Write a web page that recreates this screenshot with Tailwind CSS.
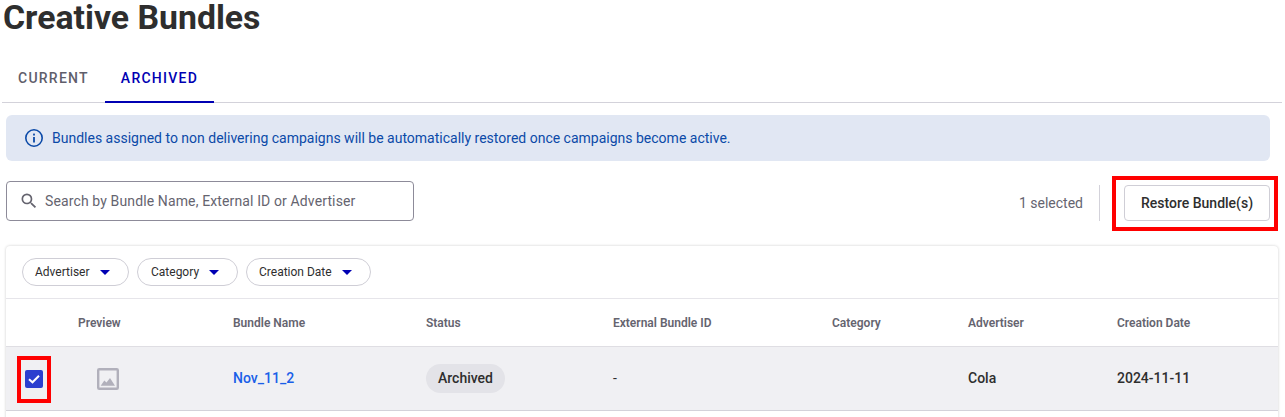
<!DOCTYPE html>
<html><head><meta charset="utf-8"><script src="https://cdn.jsdelivr.net/npm/@tailwindcss/browser@4"></script></head>
<body class="bg-white font-['Roboto',sans-serif] overflow-hidden">
<div class="relative h-[417px] w-[1285px] overflow-hidden">
  <div class="pl-[3px] h-[37px]"><h1 class="text-[33.8px] leading-[35px] font-bold text-[#2e2e2e]">Creative Bundles</h1></div>
  <div class="ml-[2px] w-[1280px] h-[66px] border-b border-[#d3d2da] flex items-end">
    <div class="h-[50px] pl-[16px] pr-[16px] pt-[2px] flex items-center text-sm font-medium tracking-[1.25px] text-[#5f5e6b]">CURRENT</div>
    <div class="h-[50px] px-[16px] pt-[2px] flex items-center text-sm font-medium tracking-[1.25px] text-[#0000b3] border-b-2 border-[#0000b3] -mb-px">ARCHIVED</div>
  </div>
  <div class="mt-[12px] ml-[6px] w-[1264px] h-[46px] rounded-md bg-[#e1e7f3] flex items-center pl-[18px] gap-[8px] text-sm text-[#0b4aa8]">
    <svg class="w-[20px] h-[20px]" viewBox="0 0 20 20" fill="none"><circle cx="10" cy="10" r="8.2" stroke="#0b4aa8" stroke-width="1.6"/><rect x="9.1" y="9" width="1.8" height="5.5" fill="#0b4aa8"/><rect x="9.1" y="5.6" width="1.8" height="1.9" fill="#0b4aa8"/></svg>
    <span>Bundles assigned to non delivering campaigns will be automatically restored once campaigns become active.</span>
  </div>
  <div class="mt-[20px] ml-[6px] w-[1264px] h-[40px] flex items-center justify-between">
    <div class="w-[408px] h-[40px] border border-[#8d8b99] rounded flex items-center pl-[12px] gap-[6px] text-sm tracking-[0.125px] text-[#65646f]">
      <svg class="w-[20px] h-[20px] shrink-0" viewBox="0 0 24 24" fill="#65646f"><path d="M15.5 14h-.79l-.28-.27A6.47 6.47 0 0 0 16 9.5 6.5 6.5 0 1 0 9.5 16c1.61 0 3.09-.59 4.23-1.57l.27.28v.79l5 4.99L20.49 19l-4.99-5zm-6 0C7.01 14 5 11.99 5 9.5S7.01 5 9.5 5 14 7.01 14 9.5 11.99 14 9.5 14z"/></svg>
      <span>Search by Bundle Name, External ID or Advertiser</span>
    </div>
    <div class="flex items-center h-[36px] mt-[4px]">
      <span class="text-sm text-[#65646f] mr-[16px]">1 selected</span>
      <div class="w-px h-[36px] bg-[#d3d2da] mr-[24px]"></div>
      <div class="w-[146px] h-[36px] border border-[#cfced6] rounded flex items-center justify-center text-sm font-medium text-[#2e2e2e]">Restore Bundle(s)</div>
    </div>
  </div>
  <div class="mt-[25px] ml-[6px] w-[1272px] h-[200px] bg-white rounded-t shadow-[0_0_3px_rgba(0,0,0,0.2)]">
    <div class="h-[53px] border-b border-[#e6e5ea] flex items-center pl-[16px] gap-[8px] text-xs font-normal text-[#2e2e2e]">
      <div class="h-[28px] w-[107px] border border-[#cfced6] rounded-full flex items-center pl-[12px] gap-[10px]"><span>Advertiser</span><svg class="w-[10px] h-[5px]" viewBox="0 0 10 5"><path d="M0 0h10L5 5z" fill="#0000b3"/></svg></div>
      <div class="h-[28px] w-[101px] border border-[#cfced6] rounded-full flex items-center pl-[13px] gap-[10px]"><span>Category</span><svg class="w-[10px] h-[5px]" viewBox="0 0 10 5"><path d="M0 0h10L5 5z" fill="#0000b3"/></svg></div>
      <div class="h-[28px] w-[125px] border border-[#cfced6] rounded-full flex items-center pl-[12px] gap-[10px]"><span>Creation Date</span><svg class="w-[10px] h-[5px]" viewBox="0 0 10 5"><path d="M0 0h10L5 5z" fill="#0000b3"/></svg></div>
    </div>
    <div class="h-[48px] border-b border-[#dfdee3] grid grid-cols-[72px_155px_193px_187px_219px_136px_149px_1fr] items-center text-xs font-semibold text-[#65646f]">
      <div></div><div>Preview</div><div>Bundle Name</div><div>Status</div><div>External Bundle ID</div><div>Category</div><div>Advertiser</div><div>Creation Date</div>
    </div>
    <div class="h-[64px] bg-[#f0f0f3] border-b border-[#d3d2da] grid grid-cols-[72px_155px_193px_187px_219px_136px_149px_1fr] items-center text-sm text-[#2e2e2e]">
      <div class="pl-[19px]"><div class="w-[18px] h-[18px] rounded-[2px] bg-[#2b3fcf] flex items-center justify-center"><svg class="w-[12px] h-[12px]" viewBox="0 0 12 12" fill="none"><path d="M1 6.3 4.5 9.3 11 2.8" stroke="#fff" stroke-width="2"/></svg></div></div>
      <div class="pl-[19px]"><svg class="w-[22px] h-[22px]" viewBox="0 0 22 22" fill="none"><rect x="1.2" y="1.2" width="19.6" height="19.6" rx="1" stroke="#b1b0bb" stroke-width="2.4"/><path d="M3.7 17.7 7.3 12.5 9.5 14.5 13 10 18 17.7z" fill="#b1b0bb"/></svg></div>
      <div class="font-medium text-[#1a5fe8] pb-[2px]">Nov_11_2</div>
      <div><span class="inline-flex items-center h-[29px] px-[12px] pb-[2px] rounded-full bg-[#e3e3e8] font-medium">Archived</span></div>
      <div class="pb-[2px]">-</div><div></div>
      <div class="font-medium pb-[2px]">Cola</div><div class="font-medium pb-[2px]">2024-11-11</div>
    </div>
  </div>
  <div class="absolute left-[1112px] top-[176px] w-[166px] h-[55px] border-4 border-[#ff0000]"></div>
  <div class="absolute left-[17px] top-[356px] w-[34px] h-[47px] border-4 border-[#ff0000]"></div>
</div>
</body></html>
